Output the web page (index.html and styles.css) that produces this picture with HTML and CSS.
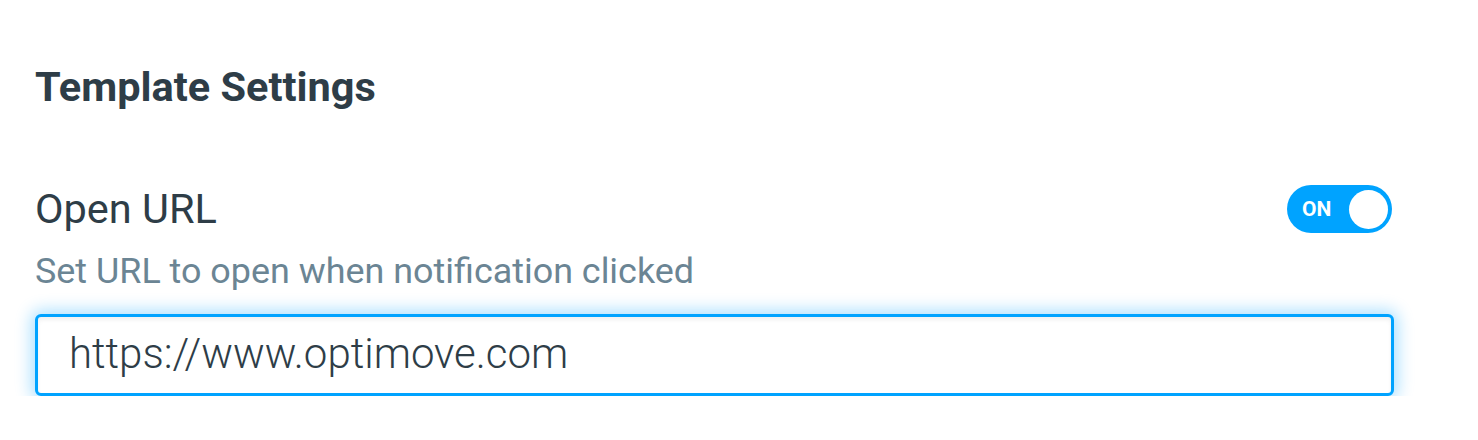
FILE: index.html
```html
<!DOCTYPE html>
<html lang="en">
<head>
    <meta charset="UTF-8">
    <meta name="viewport" content="width=device-width, initial-scale=1.0">
    <title>Template Settings</title>
    <link rel="stylesheet" href="styles.css">
</head>
<body>
    <div class="container">
        <h2>Template Settings</h2>
        <div class="setting">
            <div class="setting-head">
                <label for="open-url">Open URL</label>
                <button class="toggle on" type="button">
                    <span class="toggle-text">ON</span>
                    <span class="toggle-knob"></span>
                </button>
            </div>
            <div class="setting-hint">Set URL to open when notification clicked</div>
            <input type="text" id="open-url" class="focused" value="https://www.optimove.com">
        </div>
    </div>
</body>
</html>
```

FILE: styles.css
```css
body {
    font-family: 'Roboto', 'Liberation Sans', sans-serif;
    margin: 0;
    padding: 0;
    background-color: #fff;
    color: #2e3d47;
}
.container {
    width: 1359px;
    padding: 62px 0 0 35px;
}
h2 {
    margin: 0;
    font-size: 41.5px;
    font-weight: 700;
    line-height: 50px;
    color: #2e3d47;
}
.setting {
    margin-top: 72px;
}
.setting-head {
    display: flex;
    justify-content: space-between;
    align-items: center;
    padding-right: 2px;
}
.setting-head label {
    font-size: 41.5px;
    font-weight: 400;
    line-height: 50px;
}
.setting-hint {
    margin-top: 17px;
    font-size: 35.9px;
    line-height: 40px;
    color: #6b8594;
}
.toggle {
    display: flex;
    align-items: center;
    justify-content: space-between;
    width: 105px;
    height: 48px;
    padding: 0 4px 0 15px;
    border: none;
    border-radius: 24px;
    background-color: #00a3ff;
    cursor: pointer;
    box-sizing: border-box;
}
.toggle-text {
    font-family: 'Roboto', sans-serif;
    font-size: 21px;
    font-weight: 700;
    color: #fff;
}
.toggle-knob {
    width: 39px;
    height: 39px;
    border-radius: 50%;
    background: #fff;
}
input {
    display: block;
    width: 100%;
    height: 82px;
    margin-top: 23px;
    padding: 0 31px 4px;
    box-sizing: border-box;
    border: 3px solid #00a3ff;
    border-radius: 6px;
    font-family: 'Roboto', sans-serif;
    font-size: 42px;
    font-weight: 300;
    color: #2e3d47;
    outline: none;
}
input.focused {
    box-shadow: 0 0 16px 4px rgba(0, 163, 255, 0.32), inset 0 3px 4px rgba(0, 0, 0, 0.06);
}
```
